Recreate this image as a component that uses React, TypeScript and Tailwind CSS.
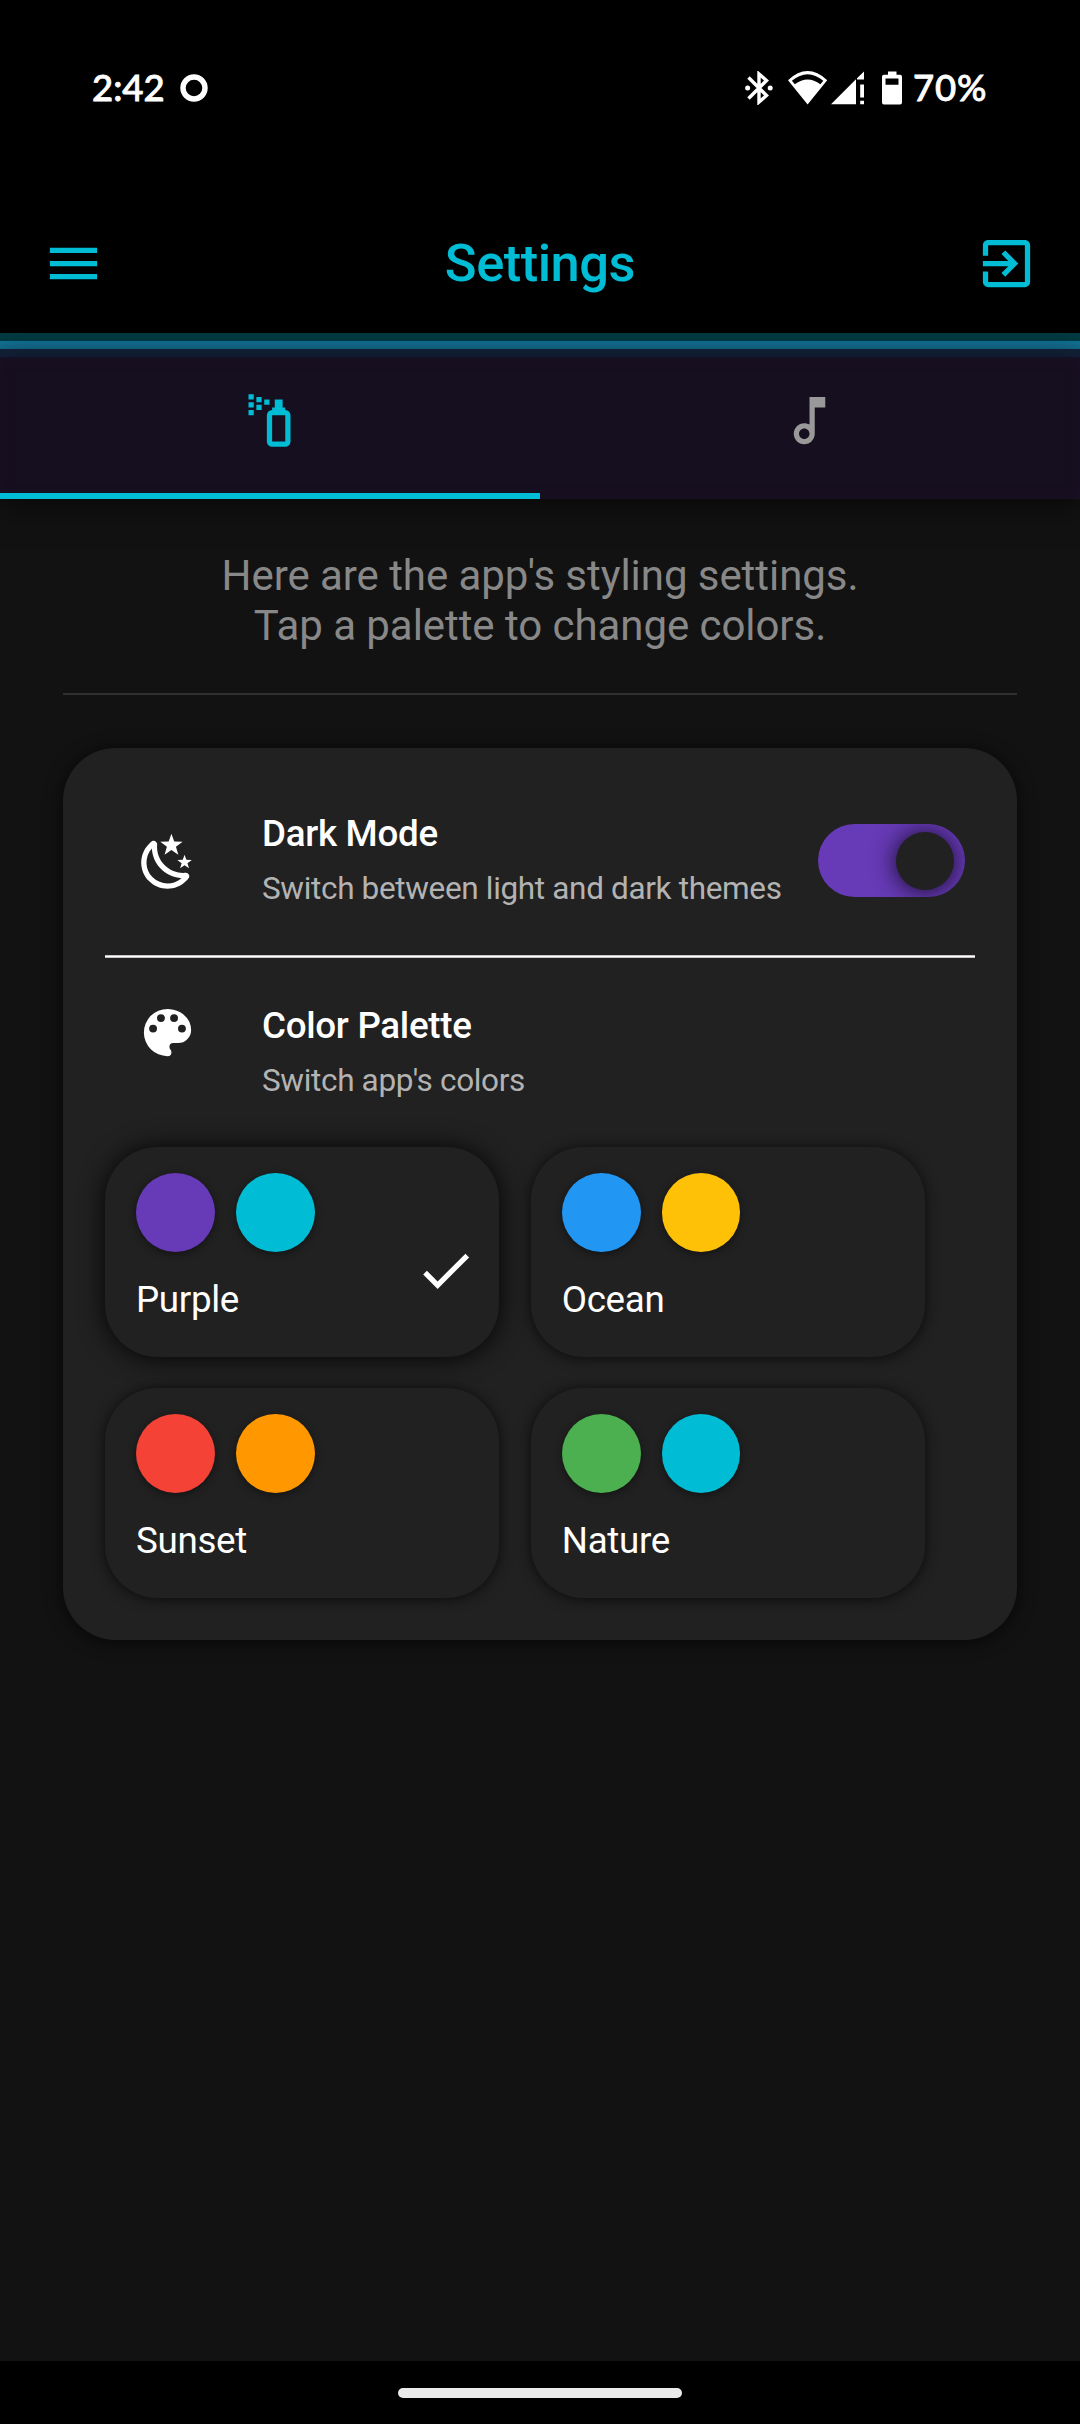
import type { ReactNode } from "react";

const paths = {
  menu: "M3,6H21V8H3V6M3,11H21V13H3V11M3,16H21V18H3V16Z",
  exit: "M19,3H5C3.89,3 3,3.89 3,5V9H5V5H19V19H5V15H3V19A2,2 0 0,0 5,21H19A2,2 0 0,0 21,19V5C21,3.89 20.1,3 19,3M10.08,15.58L11.5,17L16.5,12L11.5,7L10.08,8.41L12.67,11H3V13H12.67L10.08,15.58Z",
  spray:
    "M10,4H12V6H10V4M7,3H9V5H7V3M7,6H9V8H7V6M6,8V10H4V8H6M6,5V7H4V5H6M6,2V4H4V2H6M13,22A2,2 0 0,1 11,20V10A2,2 0 0,1 13,8V7H14V4H17V7H18V8A2,2 0 0,1 20,10V20A2,2 0 0,1 18,22H13M13,10V20H18V10H13Z",
  note: "M12 3l.01 10.55c-.59-.34-1.27-.55-2-.55C7.79 13 6 14.79 6 17s1.79 4 4.01 4S14 19.21 14 17V7h4V3h-6zm-1.99 16c-1.1 0-2-.9-2-2s.9-2 2-2 2 .9 2 2-.9 2-2 2z",
  night:
    "M17.75,4.09L15.22,6.03L16.13,9.09L13.5,7.28L10.87,9.09L11.78,6.03L9.25,4.09L12.44,4L13.5,1L14.56,4L17.75,4.09M21.25,11L19.61,12.25L20.2,14.23L18.5,13.06L16.8,14.23L17.39,12.25L15.75,11L17.81,10.95L18.5,9L19.19,10.95L21.25,11M18.97,15.95C19.8,15.87 20.69,17.05 20.16,17.8C19.84,18.25 19.5,18.67 19.08,19.07C15.17,23 8.84,23 4.94,19.07C1.03,15.17 1.03,8.83 4.94,4.93C5.34,4.53 5.76,4.17 6.21,3.85C6.96,3.32 8.14,4.21 8.06,5.04C7.79,7.9 8.75,10.87 10.95,13.06C13.14,15.26 16.1,16.22 18.97,15.95M17.33,17.97C14.5,17.81 11.7,16.64 9.53,14.5C7.36,12.31 6.2,9.5 6.04,6.68C3.23,9.82 3.34,14.64 6.35,17.66C9.37,20.67 14.19,20.78 17.33,17.97Z",
  palette:
    "M17.5,12A1.5,1.5 0 0,1 16,10.5A1.5,1.5 0 0,1 17.5,9A1.5,1.5 0 0,1 19,10.5A1.5,1.5 0 0,1 17.5,12M14.5,8A1.5,1.5 0 0,1 13,6.5A1.5,1.5 0 0,1 14.5,5A1.5,1.5 0 0,1 16,6.5A1.5,1.5 0 0,1 14.5,8M9.5,8A1.5,1.5 0 0,1 8,6.5A1.5,1.5 0 0,1 9.5,5A1.5,1.5 0 0,1 11,6.5A1.5,1.5 0 0,1 9.5,8M6.5,12A1.5,1.5 0 0,1 5,10.5A1.5,1.5 0 0,1 6.5,9A1.5,1.5 0 0,1 8,10.5A1.5,1.5 0 0,1 6.5,12M12,3A9,9 0 0,0 3,12A9,9 0 0,0 12,21A1.5,1.5 0 0,0 13.5,19.5C13.5,19.11 13.35,18.76 13.11,18.5C12.88,18.23 12.73,17.88 12.73,17.5A1.5,1.5 0 0,1 14.23,16H16A5,5 0 0,0 21,11C21,6.58 16.97,3 12,3Z",
  check: "M21,7L9,19L3.5,13.5L4.91,12.09L9,16.17L19.59,5.59L21,7Z",
};

function Icon({ name, className = "" }: { name: keyof typeof paths; className?: string }) {
  return (
    <svg viewBox="0 0 24 24" fill="currentColor" className={`size-[63px] shrink-0 ${className}`}>
      <path d={paths[name]} />
    </svg>
  );
}

function StatusBar() {
  return (
    <div className="flex h-[176px] items-center px-[92px] font-['Lato'] text-[36.5px] font-medium leading-none text-white">
      <span className="mt-[-2px] w-[74px] whitespace-nowrap [-webkit-text-stroke:0.8px_white]">2:42</span>
      <svg viewBox="0 0 28 28" className="ml-[14px] size-[28px]">
        <circle cx="14" cy="14" r="11" fill="none" stroke="white" strokeWidth="5.4" />
      </svg>
      <div className="ml-auto flex items-center">
        <svg viewBox="0 0 28 34" className="h-[34px] w-[28px]" fill="none" stroke="white" strokeWidth="3.4">
          <path d="M3.5 6.5L21.5 24.5L14 31V3L21.5 9.5L3.5 27.5" />
          <circle cx="2.6" cy="17" r="2.5" fill="white" stroke="none" />
          <circle cx="25.2" cy="17" r="2.5" fill="white" stroke="none" />
        </svg>
        <svg viewBox="0 0 40 34" className="ml-[15px] h-[34px] w-[40px]" fill="white">
          <path d="M0 9.2Q19.6 -9 39.2 9.2L19.6 33.5ZM3.9 9.8L6.8 13.2Q19.6 3.8 32.4 13.2L35.3 9.8Q19.6 -3.5 3.9 9.8Z" fillRule="evenodd" />
        </svg>
        <svg viewBox="0 0 34 34" className="ml-[3px] h-[34px] w-[34px]" fill="white">
          <path d="M0 33.3L25 8.3V33.3ZM26 7.3L33 0.5V8.5H26ZM29.2 13.5H33V26.5H29.2ZM29.2 29.7H33V33.3H29.2Z" />
        </svg>
        <svg viewBox="0 0 20 34" className="ml-[17px] h-[34px] w-[20px]" fill="white">
          <path
            d="M6 0.5H14.5V3.7H18Q20 3.7 20 5.7V31.5Q20 33.5 18 33.5H2Q0 33.5 0 31.5V5.7Q0 3.7 2 3.7H6ZM3.5 7.6V13.8H16.5V7.6Z"
            fillRule="evenodd"
          />
        </svg>
        <span className="ml-[11px] mt-[-2px] w-[75px] whitespace-nowrap tracking-[0.8px] [-webkit-text-stroke:0.8px_white]">70%</span>
      </div>
    </div>
  );
}

function SettingText({ title, detail }: { title: string; detail: string }) {
  return (
    <div>
      <div className="text-[36.75px] font-medium leading-[44px] tracking-[-0.3px] text-white">{title}</div>
      <div className="mt-[13px] whitespace-nowrap text-[31.5px] leading-[40px] tracking-[-0.34px] text-[#b3b3b3]">{detail}</div>
    </div>
  );
}

function Swatch({ color }: { color: string }) {
  return <div className={`size-[78.75px] rounded-full shadow-[0_2px_8px_rgba(0,0,0,0.45)] ${color}`} />;
}

function PaletteCard({ name, colors, selected }: { name: string; colors: [string, string]; selected?: boolean }) {
  return (
    <div
      className={`flex h-[210px] w-[394px] justify-between rounded-[52.5px] bg-[#212121] pl-[31px] pt-[26.25px] ${
        selected ? "shadow-[0_1px_26px_rgba(0,0,0,0.9)]" : "shadow-[0_1px_14px_rgba(0,0,0,0.7)]"
      }`}
    >
      <div>
        <div className="flex gap-[21px]">
          <Swatch color={colors[0]} />
          <Swatch color={colors[1]} />
        </div>
        <div className="mt-[26.5px] text-[36.75px] leading-[44px] tracking-[-0.33px] text-white">{name}</div>
      </div>
      {selected && <Icon name="check" className="mr-[22.5px] mt-[66px] text-white" />}
    </div>
  );
}

function Tab({ children, active }: { children: ReactNode; active?: boolean }) {
  return (
    <div className="flex flex-1 flex-col items-center">
      <div className="mr-[1px] mt-[32px]">{children}</div>
      {active && <div className="mt-auto h-[5.25px] w-full bg-[#00bcd4]" />}
    </div>
  );
}

export default function App() {
  return (
    <div className="flex h-[2424px] w-[1080px] flex-col overflow-hidden bg-[#121212] font-['Roboto',sans-serif]">
      <div className="bg-black">
        <StatusBar />
        <div className="flex h-[157px] items-center justify-between px-[42px] pt-[17px] text-[#00bcd4]">
          <Icon name="menu" />
          <div className="text-[52.5px] font-medium leading-[60px] tracking-[-0.5px]">Settings</div>
          <Icon name="exit" />
        </div>
      </div>
      <div className="h-[8px] bg-[#003a42]" />
      <div className="h-[8px] bg-linear-to-b from-[#116a8b] to-[#145d7b] shadow-[inset_0_0_14px_rgba(20,130,165,0.5)]" />
      <div className="h-[8px] bg-[#13223a]" />
      <div className="flex h-[141.5px] bg-[#160f1f] shadow-[0_6px_30px_rgba(0,0,0,0.6),inset_0_0_14px_rgba(30,20,44,0.5)]">
        <Tab active>
          <Icon name="spray" className="text-[#00bcd4]" />
        </Tab>
        <Tab>
          <Icon name="note" className="text-[#999999]" />
        </Tab>
      </div>

      <div className="mx-[63px] flex flex-1 flex-col pt-[52.5px]">
        <p className="text-center text-[42px] leading-[50px] tracking-[-0.06px] text-[#888888]">
          Here are the app's styling settings.
          <br />
          Tap a palette to change colors.
        </p>
        <div className="mt-[41.5px] h-[2.5px] bg-[#303030]" />

        <div className="mt-[52.5px] h-[892px] rounded-[52.5px] bg-[#212121] px-[42px] shadow-[0_2px_18px_rgba(0,0,0,0.65)]">
          <div className="flex h-[207px] pt-[64px]">
            <Icon name="night" className="ml-[30.5px] mt-[19px] text-white" />
            <div className="ml-[63.5px]">
              <SettingText title="Dark Mode" detail="Switch between light and dark themes" />
            </div>
            <div className="ml-auto mr-[10.5px] mt-[12px] flex h-[73.5px] w-[147px] justify-end overflow-hidden rounded-full bg-[#673ab7] pr-[11px] pt-[8px]">
              <div className="size-[58px] rounded-full bg-[#212121] shadow-[0_1px_24px_rgba(0,0,0,0.85)]" />
            </div>
          </div>
          <div className="h-[3px] border-y border-[#c8c4c8] bg-white" />
          <div className="flex h-[189px] pt-[46.5px]">
            <Icon name="palette" className="ml-[30.5px] mt-[-3.5px] text-white" />
            <div className="ml-[63.5px]">
              <SettingText title="Color Palette" detail="Switch app's colors" />
            </div>
          </div>
          <div className="grid grid-cols-[394px_394px] gap-x-[31.75px] gap-y-[31.25px]">
            <PaletteCard name="Purple" colors={["bg-[#673ab7]", "bg-[#00bcd4]"]} selected />
            <PaletteCard name="Ocean" colors={["bg-[#2196f3]", "bg-[#ffc107]"]} />
            <PaletteCard name="Sunset" colors={["bg-[#f44336]", "bg-[#ff9800]"]} />
            <PaletteCard name="Nature" colors={["bg-[#4caf50]", "bg-[#00bcd4]"]} />
          </div>
        </div>
      </div>

      <div className="flex h-[63px] justify-center bg-black pt-[27px]">
        <div className="h-[10px] w-[284px] rounded-full bg-[#ebebeb]" />
      </div>
    </div>
  );
}
